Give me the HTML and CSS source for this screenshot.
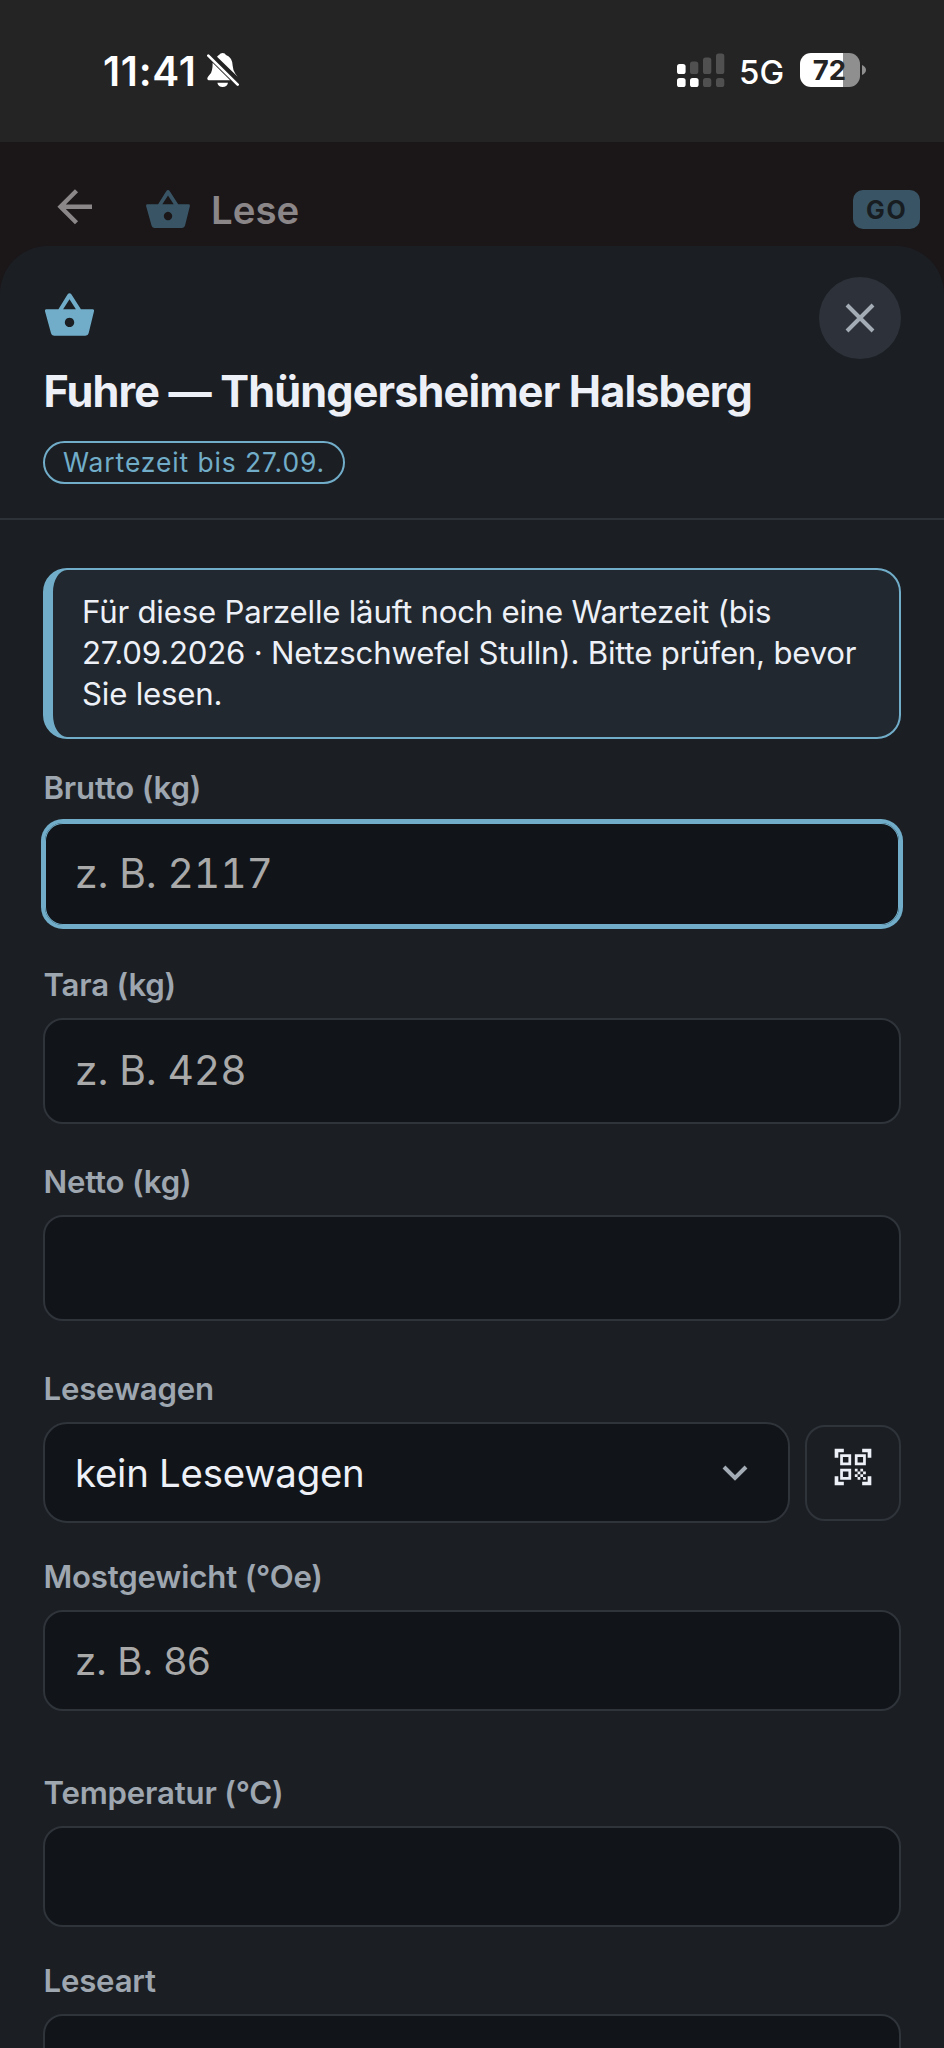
FILE: index.html
```html
<!DOCTYPE html>
<html lang="de">
<head>
<meta charset="utf-8">
<title>Lese</title>
<link rel="stylesheet" href="styles.css">
</head>
<body>
<div class="screen">
  <div class="status">
    <span class="time">11:41</span>
    <svg class="bell" width="32" height="35" viewBox="0 0 96 105">
      <path fill="#fff" d="M30 11 Q34 7 36 6 Q40 0 47 0 Q54 0 57 6 Q76 13 77 38 Q78 53 85 62 L92 71 Z M17 29 L70 82 H8 Q0 82 1 75 Q3 70 9 64 Q17 55 17 29 Z M31 89 H63 Q60 102 47 102 Q34 102 31 89 Z"/>
      <path stroke="#242424" stroke-width="15" d="M8 8 L92 93"/>
      <path stroke="#fff" stroke-width="8" stroke-linecap="round" d="M4 8 L92 95"/>
    </svg>
    <svg class="signal" width="48" height="34" viewBox="0 0 48 34">
      <g fill="#fff"><rect x="0" y="11" width="8.6" height="10" rx="2.6"/><rect x="0" y="25" width="8.6" height="9" rx="2.6"/><rect x="13" y="25" width="8.6" height="9" rx="2.6"/></g>
      <g fill="#505050"><rect x="13" y="8.5" width="8.3" height="12.5" rx="2.6"/><rect x="26" y="4.5" width="8.3" height="16.5" rx="2.6"/><rect x="39" y="0.5" width="8.3" height="20.5" rx="2.6"/><rect x="26" y="25" width="8.3" height="9" rx="2.6"/><rect x="39" y="25" width="8.3" height="9" rx="2.6"/></g>
    </svg>
    <span class="network">5G</span>
    <span class="battery">72</span>
    <svg class="nub" width="4" height="10" viewBox="0 0 4 10"><path fill="#8f8f8f" d="M0 0 Q4 2 4 5 Q4 8 0 10 Z"/></svg>
  </div>

  <div class="appbar">
    <svg class="back" width="36" height="36" viewBox="0 0 36 36"><path fill="none" stroke="#8b8688" stroke-width="4.4" d="M35 17.7 H4 M19.5 1.7 L3.5 17.7 L19.5 33.7"/></svg>
    <svg class="basket-dim" width="44" height="38" viewBox="0 0 146 127"><path fill="#395565" fill-rule="evenodd" d="M40 48 L67 4 Q73 -4 79 4 L107 48 H142 Q147 48 146 54 L130 119 Q128 127 120 127 H27 Q20 127 18 119 L0 54 Q-1 48 4 48 Z M54 48 H92 L73 18 Z M73 73 a14 14 0 1 0 .1 0 Z"/></svg>
    <span class="appbar-title">Lese</span>
    <span class="go">GO</span>
  </div>

  <div class="sheet">
    <div class="sheet-head">
      <div class="head-row">
        <svg class="basket" width="49" height="43" viewBox="0 0 146 127"><path fill="#71adc9" fill-rule="evenodd" d="M40 48 L67 4 Q73 -4 79 4 L107 48 H142 Q147 48 146 54 L130 119 Q128 127 120 127 H27 Q20 127 18 119 L0 54 Q-1 48 4 48 Z M54 48 H92 L73 18 Z M73 73 a14 14 0 1 0 .1 0 Z"/></svg>
        <div class="close"><svg width="30" height="30" viewBox="0 0 30 30"><path stroke="#a3abb5" stroke-width="4" d="M2 2 L28 28 M28 2 L2 28"/></svg></div>
      </div>
      <h1 class="title">Fuhre — Thüngersheimer Halsberg</h1>
      <span class="chip">Wartezeit bis 27.09.</span>
    </div>

    <div class="form">
      <div class="note">Für diese Parzelle läuft noch eine Wartezeit (bis<br>27.09.2026 · Netzschwefel Stulln). Bitte prüfen, bevor<br>Sie lesen.</div>

      <div class="label">Brutto (kg)</div>
      <div class="input num focused">z. B. 2117</div>

      <div class="label">Tara (kg)</div>
      <div class="input num">z. B. 428</div>

      <div class="label">Netto (kg)</div>
      <div class="input num last-weight"></div>

      <div class="label">Lesewagen</div>
      <div class="select-row">
        <div class="input select"><span>kein Lesewagen</span>
          <svg width="26" height="16" viewBox="0 0 26 16"><path fill="none" stroke="#a3abb5" stroke-width="4" d="M2 2 L13 13 L24 2"/></svg>
        </div>
        <div class="scan"><svg width="44" height="44" viewBox="0 0 24 24"><path fill="#edf1f7" d="M9.5 6.5v3h-3v-3h3M11 5H5v6h6V5zm-1.5 9.5v3h-3v-3h3M11 13H5v6h6v-6zm6.500-6.500v3h-3v-3h3M19 5h-6v6h6V5zm-6 8h1.500v1.500H13V13zm1.500 1.500H16V16h-1.500v-1.500zM16 13h1.500v1.500H16V13zm-3 3h1.500v1.500H13V16zm1.500 1.500H16V19h-1.500v-1.500zM16 16h1.500v1.500H16V16zm1.500-1.500H19V16h-1.500v-1.500zm0 3H19V19h-1.500v-1.500zM22 7h-2V4h-3V2h5v5zm0 15v-5h-2v3h-3v2h5zM2 22h5v-2H4v-3H2v5zM2 2v5h2V4h3V2H2z"/></svg></div>
      </div>

      <div class="label">Mostgewicht (°Oe)</div>
      <div class="input must">z. B. 86</div>

      <div class="label">Temperatur (°C)</div>
      <div class="input">&nbsp;</div>

      <div class="label">Leseart</div>
      <div class="input">&nbsp;</div>
    </div>
  </div>
</div>
</body>
</html>
```

FILE: styles.css
```css
* { box-sizing: border-box; }
body {
  margin: 0;
  background: #1b1618;
  font-family: Inter, "Liberation Sans", sans-serif;
}
svg { display: block; flex: none; }
.screen {
  width: 944px;
  height: 2048px;
  overflow: hidden;
  display: flex;
  flex-direction: column;
}

/* status bar */
.status {
  flex: none;
  height: 142px;
  padding: 0 78px 2px 103px;
  background: #242424;
  color: #fff;
  display: flex;
  align-items: center;
}
.time { width: 104px; margin-top: 2px; font-size: 40.5px; font-weight: 600; letter-spacing: 0.7px; white-space: nowrap; }
.signal { margin-left: auto; }
.network { margin: 3px 0 0 14px; width: 61px; font-size: 33px; font-weight: 500; }
.battery {
  width: 60px;
  height: 34px;
  border-radius: 11px;
  background: linear-gradient(90deg, #fff 43px, #8f8f8f 43px);
  color: #242424;
  font-size: 27.5px;
  font-weight: 700;
  line-height: 35px;
  text-align: center;
  padding-right: 1px;
}
.nub { margin-left: 2px; }

/* dimmed app bar behind the sheet */
.appbar {
  flex: none;
  height: 104px;
  padding: 25px 24px 0 57px;
  display: flex;
  align-items: center;
  color: #8b8688;
}
.basket-dim { margin-left: 53px; margin-top: 4px; }
.appbar-title { margin-left: 21px; margin-top: 6px; font-size: 38.4px; font-weight: 600; }
.go {
  margin-left: auto;
  margin-top: 5px;
  width: 67px;
  height: 39px;
  border-radius: 10px;
  background: #395565;
  color: #181d22;
  font-size: 25px;
  font-weight: 700;
  letter-spacing: 1.8px;
  line-height: 40px;
  padding-left: 13px;
}

/* sheet */
.sheet {
  flex: 1;
  border-radius: 48px 48px 0 0;
  background: #1b1f24;
}
.sheet-head {
  height: 274px;
  padding: 31px 43px 0;
  border-bottom: 2px solid #2d3138;
}
.head-row { display: flex; justify-content: space-between; }
.basket { margin: 16px 0 0 2px; }
.close {
  width: 82px;
  height: 82px;
  border-radius: 50%;
  background: #2d3139;
  display: flex;
  align-items: center;
  justify-content: center;
  padding-bottom: 1px;
}
.title {
  margin: 6px 0 0 0.5px;
  font-size: 43.2px;
  font-weight: 700;
  line-height: 52px;
  letter-spacing: -0.86px;
  white-space: nowrap;
  color: #edf1f7;
}
.chip {
  display: block;
  width: 302px;
  height: 43px;
  margin-top: 24px;
  padding-left: 18px;
  border: 2px solid #71adc9;
  border-radius: 22px;
  color: #71adc9;
  font-size: 26.4px;
  line-height: 38px;
  letter-spacing: 0.92px;
  white-space: nowrap;
}

/* form */
.form { padding: 48px 43px 0; }
.note {
  height: 171px;
  padding: 22px 0 0 29px;
  border: 2px solid #71adc9;
  border-left-width: 10px;
  border-radius: 24px;
  background: #21282f;
  color: #edf1f7;
  font-size: 31.2px;
  line-height: 41px;
  letter-spacing: -0.21px;
  white-space: nowrap;
}
.label {
  height: 38px;
  margin: 35px 0 14px;
  padding-left: 0.5px;
  color: #9ea6b0;
  font-size: 31.2px;
  font-weight: 600;
  line-height: 38px;
  letter-spacing: -0.2px;
}
.note + .label { margin-top: 30px; }
.input {
  height: 101px;
  padding: 0 30px;
  border: 2px solid #2f333a;
  border-radius: 20px;
  background: #111519;
  color: #a9a9a9;
  font-size: 38.4px;
  letter-spacing: -0.25px;
  display: flex;
  align-items: center;
}
.num {
  height: 106px;
  margin-bottom: 39px;
  padding-bottom: 2px;
  font-size: 40.8px;
  letter-spacing: -0.1px;
  font-variant-numeric: tabular-nums;
}
.focused { border-color: #71adc9; box-shadow: 0 0 0 2px #71adc9, inset 0 0 0 1px #71adc9; }
.last-weight { margin-bottom: 49px; }
.select-row { display: flex; align-items: center; gap: 15px; }
.select {
  flex: 1;
  justify-content: space-between;
  padding-right: 40px;
  border-radius: 24px;
  color: #edf1f7;
}
.scan {
  width: 96px;
  height: 96px;
  padding-bottom: 11px;
  border: 2px solid #2f333a;
  border-radius: 20px;
  display: flex;
  align-items: center;
  justify-content: center;
}
.must { margin-bottom: 63px; }
```
